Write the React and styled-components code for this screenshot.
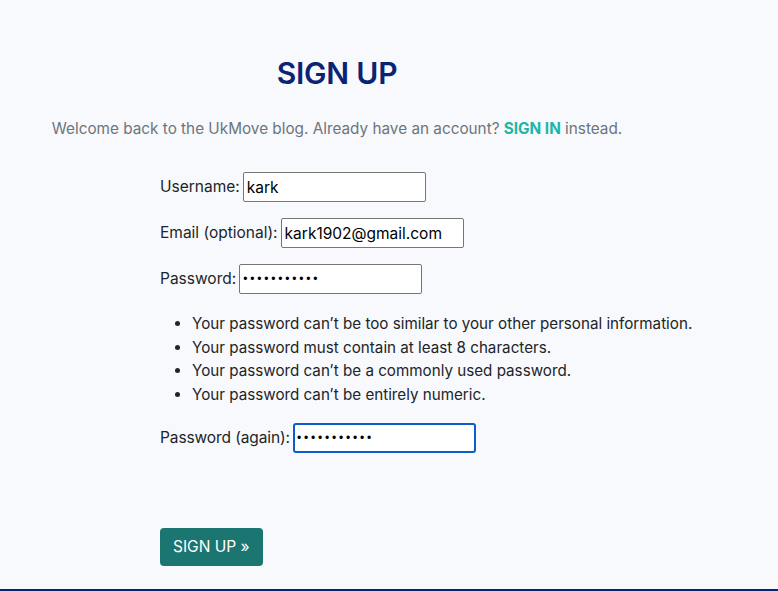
import React from 'react'
import styled, { createGlobalStyle } from 'styled-components'

const GlobalStyle = createGlobalStyle`
  html, body {
    margin: 0;
    padding: 0;
    background: #f8f9fc;
    font-family: Inter, "Noto Sans", "Liberation Sans", sans-serif;
    color: #212529;
  }
`

const Page = styled.div`
  min-height: 100vh;
  display: flex;
  flex-direction: column;
  box-sizing: border-box;
`

const Main = styled.main`
  flex: 1;
  padding-top: 54px;
`

const Intro = styled.section`
  width: 594px;
  margin-left: 40px;
  text-align: center;
`

const Title = styled.h1`
  margin: 0;
  font-size: 30px;
  line-height: 38px;
  font-weight: 600;
  color: #0a2473;
  letter-spacing: -0.2px;
`

const Welcome = styled.p`
  margin: 25px 0 0;
  font-size: 15.3px;
  line-height: 24px;
  color: #6c757d;
`

const SignInLink = styled.a`
  color: #1fb5a8;
  font-weight: 700;
  text-decoration: none;
`

const Form = styled.form`
  margin: 31px 0 0 160px;
  display: flex;
  flex-direction: column;
`

const Row = styled.div`
  display: flex;
  align-items: center;
  gap: 3px;
  font-size: 15.5px;
  margin-bottom: ${p => p.$gap || 16}px;
`

const Label = styled.label`
  line-height: 24px;
  letter-spacing: ${p => p.$tight ? '-0.1px' : '0'};
`

const Input = styled.input`
  box-sizing: border-box;
  width: 183px;
  height: 30px;
  padding: 0 3px;
  border: 1px solid #767676;
  border-radius: 2px;
  background: #fff;
  font-family: inherit;
  font-size: 15.5px;
  color: #000;
  caret-color: #000;
  outline: none;
  ${p => p.$focused && `
    border: 2px solid #0a5ec8;
    border-radius: 3px;
    padding: 0 2px;
  `}
  &[type="password"] {
    font-family: "Liberation Sans", sans-serif;
    font-size: 12px;
    letter-spacing: 2.8px;
  }
`

const HelpList = styled.ul`
  margin: 2px 0 16px;
  padding-left: 32px;
  font-size: 15.2px;
  line-height: 23.7px;
  color: #212529;
`

const Submit = styled.button`
  align-self: flex-start;
  margin-top: 59px;
  height: 38px;
  padding: 0 13px;
  border: none;
  border-radius: 4px;
  background: #1b7671;
  color: #fff;
  font-family: inherit;
  font-size: 15.5px;
  cursor: pointer;
`

const Footer = styled.footer`
  height: 2px;
  background: #0a2473;
`

const rules = [
  "Your password can’t be too similar to your other personal information.",
  "Your password must contain at least 8 characters.",
  "Your password can’t be a commonly used password.",
  "Your password can’t be entirely numeric.",
]

export default function App() {
  return (
    <Page>
      <GlobalStyle />
      <Main>
        <Intro>
          <Title>SIGN UP</Title>
          <Welcome>
            Welcome back to the UkMove blog. Already have an account?{' '}
            <SignInLink href="#">SIGN IN</SignInLink> instead.
          </Welcome>
        </Intro>
        <Form onSubmit={e => e.preventDefault()}>
          <Row>
            <Label>Username:</Label>
            <Input type="text" defaultValue="kark" />
          </Row>
          <Row>
            <Label>Email (optional):</Label>
            <Input type="email" defaultValue="kark1902@gmail.com" />
          </Row>
          <Row $gap={0}>
            <Label>Password:</Label>
            <Input type="password" defaultValue="kark1902abc" />
          </Row>
          <HelpList>
            {rules.map(r => <li key={r}>{r}</li>)}
          </HelpList>
          <Row $gap={0}>
            <Label $tight>Password (again):</Label>
            <Input type="password" defaultValue="kark1902abc" $focused autoFocus />
          </Row>
          <Submit type="submit">SIGN UP »</Submit>
        </Form>
      </Main>
      <Footer />
    </Page>
  )
}
